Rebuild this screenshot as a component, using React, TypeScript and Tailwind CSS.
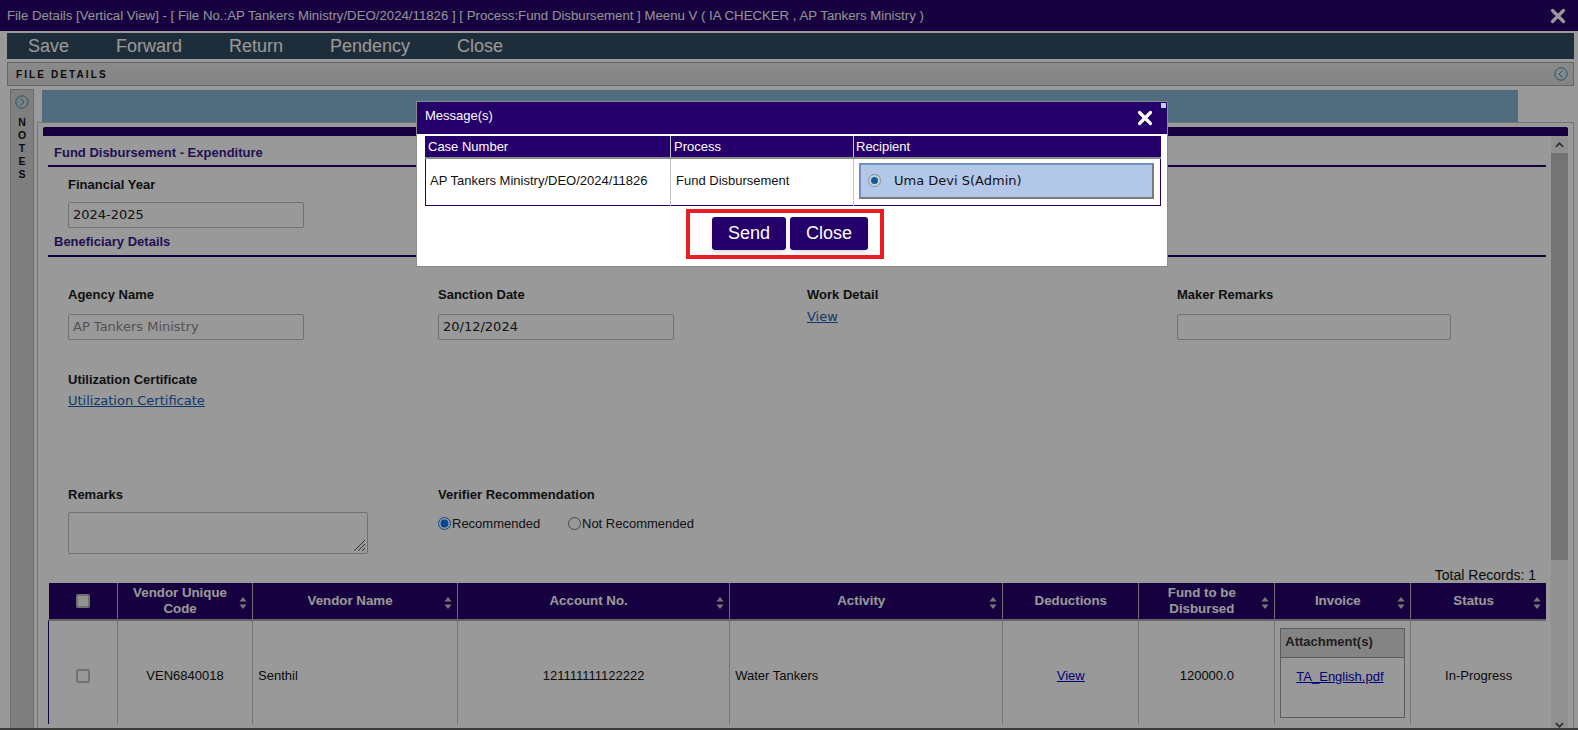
import { X } from "lucide-react";

const columns = [
  { label: "", width: "w-[69px]" },
  { label: "Vendor Unique Code", width: "w-[135px]", sort: true },
  { label: "Vendor Name", width: "w-[205px]", sort: true },
  { label: "Account No.", width: "w-[272px]", sort: true },
  { label: "Activity", width: "w-[273px]", sort: true },
  { label: "Deductions", width: "w-[136px]" },
  { label: "Fund to be Disbursed", width: "w-[136px]", sort: true },
  { label: "Invoice", width: "w-[136px]", sort: true },
  { label: "Status", width: "w-[135px]", sort: true },
];

const menuItems = [
  { label: "Save", width: "w-[88px]" },
  { label: "Forward", width: "w-[113px]" },
  { label: "Return", width: "w-[101px]" },
  { label: "Pendency", width: "w-[127px]" },
  { label: "Close", width: "w-[60px]" },
];

function SortIcon() {
  return (
    <svg viewBox="0 0 8 14" className="absolute right-[5px] top-[13px] w-[8px] h-[14px] fill-[#c9c9c9]">
      <path d="M4 1l3.5 4.5h-7zM4 13L.5 8.5h7z" />
    </svg>
  );
}

function RoundArrow({ dir }: { dir: "left" | "right" }) {
  return (
    <svg viewBox="0 0 14 14" className="w-[14px] h-[14px] fill-none stroke-[#2f8fc0]">
      <circle cx="7" cy="7" r="6.2" />
      <path d={dir === "left" ? "M8.5 3.5L5 7l3.5 3.5" : "M5.5 3.5L9 7l-3.5 3.5"} />
    </svg>
  );
}

function Field({ label, children }: { label: string; children?: React.ReactNode }) {
  return (
    <div>
      <div className="text-[13px] leading-[16px] font-bold text-[#1a1a1a]">{label}</div>
      {children}
    </div>
  );
}

function TextBox({ value, disabled, width, tight }: { value: string; disabled?: boolean; width: string; tight?: boolean }) {
  return (
    <div
      className={`${width} h-[26px] ${tight ? "mt-[9px]" : "mt-[11px]"} px-[4px] border border-[#bdbdbd] rounded-[2px] font-['DejaVu_Sans'] text-[13px] leading-[24px] ${
        disabled ? "text-[#8a8a8a]" : "text-[#222]"
      }`}
    >
      {value}
    </div>
  );
}

function SectionTitle({ title, className }: { title: string; className: string }) {
  return (
    <div className={`${className} mr-[5px] border-b-2 border-[#26006a] pl-[6px] text-[13px] leading-[20px] font-bold text-[#3a1a8a]`}>
      {title}
    </div>
  );
}

export default function App() {
  return (
    <div className="relative h-[730px] w-[1578px] overflow-hidden bg-white border-b-2 border-[#3a3a3a] font-['Liberation_Sans',sans-serif]">
      {/* Title bar */}
      <div className="h-[31px] bg-[#26006a] flex items-center justify-between pl-[7px] pr-[9px] text-white">
        <span className="text-[13.23px] text-[#f4f4f4]">
          File Details [Vertical View] - [ File No.:AP Tankers Ministry/DEO/2024/11826 ] [ Process:Fund Disbursement ] Meenu V ( IA CHECKER , AP Tankers Ministry )
        </span>
        <X className="w-[22px] h-[22px] text-white" strokeWidth={3.5} />
      </div>

      {/* Menu */}
      <div className="mt-[2px] ml-[7px] mr-[4px] h-[26px] bg-[#324b62] flex items-center pl-[21px] text-[18px] text-white">
        {menuItems.map((item) => (
          <span key={item.label} className={item.width}>{item.label}</span>
        ))}
      </div>

      {/* File details strip */}
      <div className="mt-[3px] ml-[7px] mr-[4px] h-[24px] border border-[#aaa] bg-gradient-to-b from-[#e6e6e6] to-[#dcdcdc] flex items-center justify-between pl-[8px] pr-[5px]">
        <span className="text-[10px] font-bold tracking-[2.1px] text-[#111]">FILE DETAILS</span>
        <RoundArrow dir="left" />
      </div>

      <div className="flex mt-[3px] ml-[10px]">
        {/* Notes rail */}
        <div className="w-[24px] h-[641px] shrink-0 border border-[#b5b5b5] bg-[#d4d4d4] flex flex-col items-center pt-[5px]">
          <RoundArrow dir="right" />
          <div className="mt-[7px] flex flex-col items-center text-[10.5px] leading-[13px] font-bold text-[#111]">
            {"NOTES".split("").map((c) => (
              <span key={c}>{c}</span>
            ))}
          </div>
        </div>

        <div className="ml-[3px] flex-1 mr-[4px]">
          <div className="ml-[5px] mr-[56px] mt-[1px] h-[32px] bg-[#84b2d2]" />

          {/* Form panel */}
          <div className="h-[608px] overflow-hidden border-l border-t border-r border-[#c4c4c4] pl-[5px] pr-[5px] pt-[4px]">
            <div className="h-[9px] bg-[#26006a] rounded-t-[2px]" />
            <div className="flex items-start">
              <div className="flex-1 min-w-0 pl-[5px] h-[588px] overflow-hidden">
                <SectionTitle title="Fund Disbursement - Expenditure" className="mt-[7px] h-[24px]" />

                <div className="ml-[20px] mt-[10px]">
                  <Field label="Financial Year">
                    <TextBox value="2024-2025" width="w-[236px]" tight />
                  </Field>
                </div>

                <SectionTitle title="Beneficiary Details" className="mt-[4px] h-[25px]" />

                <div className="ml-[20px] mt-[30px] grid grid-cols-[370px_369px_370px_1fr]">
                  <Field label="Agency Name">
                    <TextBox value="AP Tankers Ministry" disabled width="w-[236px]" />
                  </Field>
                  <Field label="Sanction Date">
                    <TextBox value="20/12/2024" width="w-[236px]" />
                  </Field>
                  <Field label="Work Detail">
                    <a className="block mt-[4px] font-['DejaVu_Sans'] text-[13px] text-[#1b62b5] underline">View</a>
                  </Field>
                  <Field label="Maker Remarks">
                    <TextBox value="" width="w-[274px]" />
                  </Field>
                </div>

                <div className="ml-[20px] mt-[32px]">
                  <Field label="Utilization Certificate">
                    <a className="block mt-[3px] font-['DejaVu_Sans'] text-[13px] text-[#1b62b5] underline">Utilization Certificate</a>
                  </Field>
                </div>

                <div className="ml-[20px] mt-[76px] grid grid-cols-[370px_1fr]">
                  <Field label="Remarks">
                    <div className="relative mt-[9px] w-[300px] h-[42px] border border-[#bdbdbd] rounded-[2px]">
                      <svg viewBox="0 0 14 14" className="absolute right-[1px] bottom-[1px] w-[14px] h-[14px] stroke-[#555]">
                        <path d="M13 2L2 13M13 6l-7 7M13 10l-3 3" />
                      </svg>
                    </div>
                  </Field>
                  <Field label="Verifier Recommendation">
                    <div className="mt-[11px] flex items-center text-[13px] text-[#222]">
                      <input type="radio" name="rec" defaultChecked className="m-0" />
                      <span className="w-[117px] pl-[1px]">Recommended</span>
                      <input type="radio" name="rec" className="m-0" />
                      <span className="pl-[1px]">Not Recommended</span>
                    </div>
                  </Field>
                </div>

                <div className="mt-[14px] pr-[15px] text-right text-[14px] leading-[14px] text-[#111]">Total Records: 1</div>

                {/* Vendor table */}
                <table className="mt-[1px] table-fixed border-collapse w-[1498px] text-[13px] text-[#111]">
                  <colgroup>
                    {columns.map((c, i) => (
                      <col key={i} className={c.width} />
                    ))}
                  </colgroup>
                  <thead>
                    <tr className="h-[37px] bg-[#26006a] text-white border-b-2 border-[#a9a9a9]">
                      {columns.map((c, i) => (
                        <th
                          key={i}
                          className={`relative font-bold text-[13.3px] leading-[16px] text-center ${c.sort ? "pl-[8px] pr-[18px]" : "px-[13px]"} ${
                            i > 0 ? "border-l border-[#b9b9b9]" : ""
                          }`}
                        >
                          {i === 0 ? (
                            <span className="block mx-auto w-[14px] h-[14px] rounded-[2px] border-2 border-[#bbb] bg-[#f2f2f2]" />
                          ) : (
                            c.label
                          )}
                          {c.sort && <SortIcon />}
                        </th>
                      ))}
                    </tr>
                  </thead>
                  <tbody>
                    <tr className="h-[111px] border-l border-[#26006a]">
                      <td className="text-center">
                        <span className="block mx-auto w-[14px] h-[14px] rounded-[2px] border-2 border-[#c0c0c0]" />
                      </td>
                      <td className="border-l border-[#c4c4c4] text-center">VEN6840018</td>
                      <td className="border-l border-[#c4c4c4] px-[5px]">Senthil</td>
                      <td className="border-l border-[#c4c4c4] text-center">121111111122222</td>
                      <td className="border-l border-[#c4c4c4] px-[5px]">Water Tankers</td>
                      <td className="border-l border-[#c4c4c4] text-center">
                        <a className="text-[#0000c8] underline">View</a>
                      </td>
                      <td className="border-l border-[#c4c4c4] text-center">120000.0</td>
                      <td className="border-l border-[#c4c4c4] px-[5px] pt-[7px] align-top">
                        <div className="w-[125px] h-[90px] border border-[#9a9a9a]">
                          <div className="h-[29px] pl-[4px] border-b border-[#9a9a9a] bg-[#dcdcdc] font-bold text-[13px] leading-[26px] text-[#333]">Attachment(s)</div>
                          <div className="pt-[9px] pl-[15px]">
                            <a className="text-[#0000c8] underline">TA_English.pdf</a>
                          </div>
                        </div>
                      </td>
                      <td className="border-l border-[#c4c4c4] text-center">In-Progress</td>
                    </tr>
                  </tbody>
                </table>
              </div>

              {/* Scrollbar */}
              <div className="w-[17px] h-[593px] shrink-0 bg-[#f1f1f1] flex flex-col items-center">
                <svg viewBox="0 0 10 6" className="w-[9px] h-[6px] mt-[6px] mb-[5px] fill-none stroke-[#505050] stroke-2">
                  <path d="M1 5l4-4 4 4" />
                </svg>
                <div className="w-full h-[407px] bg-[#c1c1c1]" />
                <svg viewBox="0 0 10 6" className="w-[9px] h-[6px] mt-auto mb-[1px] fill-none stroke-[#505050] stroke-2">
                  <path d="M1 1l4 4 4-4" />
                </svg>
              </div>
            </div>
          </div>
        </div>
      </div>

      {/* Dim layer */}
      <div className="absolute inset-0 bg-black/40" />

      {/* Message dialog */}
      <div className="absolute left-[416px] top-[101px] w-[752px] h-[166px] bg-white border border-[#8a8a8a]">
        <div className="relative h-[32px] bg-[#26006a] flex items-center justify-between pl-[8px] pr-[11px] text-white">
          <span className="text-[13px] mb-[5px]">Message(s)</span>
          <X className="w-[22px] h-[22px]" strokeWidth={3.5} />
          <span className="absolute right-[1px] top-[1px] w-[5px] h-[5px] bg-[#b8d4f0]" />
        </div>

        <table className="mt-[2px] ml-[8px] w-[736px] table-fixed border-collapse border border-[#26006a] text-[13px] text-[#111]">
          <colgroup>
            <col className="w-[245px]" />
            <col className="w-[183px]" />
            <col />
          </colgroup>
          <thead>
            <tr className="h-[21px] bg-[#26006a] text-white text-left border-b-2 border-[#8a8a8a]">
              <th className="font-normal pl-[2px]">Case Number</th>
              <th className="font-normal pl-[3px] border-l border-[#c4c4c4]">Process</th>
              <th className="font-normal pl-[2px] border-l border-[#c4c4c4]">Recipient</th>
            </tr>
          </thead>
          <tbody>
            <tr className="h-[48px]">
              <td className="pl-[4px] pb-[2px]">AP Tankers Ministry/DEO/2024/11826</td>
              <td className="pl-[5px] pb-[2px] border-l border-[#c4c4c4]">Fund Disbursement</td>
              <td className="pl-[5px] pr-[6px] pb-[2px] border-l border-[#c4c4c4]">
                <div className="h-[36px] flex items-center bg-[#b3c8e8] border-2 border-t-[#6f8fc4] border-l-[#6f8fc4] border-r-[#7a7a7a] border-b-[#7a7a7a] pl-[8px]">
                  <span className="w-[11px] h-[11px] rounded-full border-2 border-[#c9d2dc] bg-[#0b5f95] ring-1 ring-[#8a9099]" />
                  <span className="ml-[14px] font-['DejaVu_Sans'] text-[13px] text-[#111]">Uma Devi S(Admin)</span>
                </div>
              </td>
            </tr>
          </tbody>
        </table>

        <div className="mt-[3px] flex justify-center pr-[15px]">
          <div className="w-[198px] h-[50px] border-4 border-[#ed1c24] flex items-center justify-center gap-[4px] pl-[11px] pb-[1px]">
            <button className="w-[74px] h-[33px] rounded-[3px] bg-[#26006a] text-white text-[18px] shadow-md">Send</button>
            <button className="w-[78px] h-[33px] rounded-[3px] bg-[#26006a] text-white text-[18px] shadow-md">Close</button>
          </div>
        </div>
      </div>
    </div>
  );
}
